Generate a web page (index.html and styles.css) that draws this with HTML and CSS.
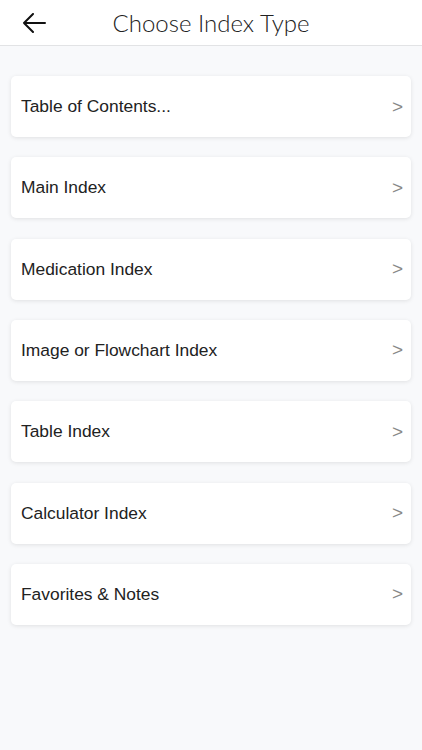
FILE: index.html
```html
<!DOCTYPE html>
<html lang="en">
<head>
    <meta charset="UTF-8">
    <meta name="viewport" content="width=device-width, initial-scale=1.0">
    <title>Choose Index Type</title>
    <link rel="stylesheet" href="styles.css">
</head>
<body>
    <!-- Top bar -->
    <div class="top-bar">
        <span class="back-btn">
            <svg width="24" height="20" viewBox="0 0 24 20">
                <path d="M23 10H2M11 1L2 10l9 9" fill="none" stroke="#111" stroke-width="2" stroke-linecap="round" stroke-linejoin="round"/>
            </svg>
        </span>
        <h1>Choose Index Type</h1>
    </div>

    <!-- Index list -->
    <div class="index-list">
        <div class="index-item"><span>Table of Contents...</span><span class="chevron">&gt;</span></div>
        <div class="index-item"><span>Main Index</span><span class="chevron">&gt;</span></div>
        <div class="index-item"><span>Medication Index</span><span class="chevron">&gt;</span></div>
        <div class="index-item"><span>Image or Flowchart Index</span><span class="chevron">&gt;</span></div>
        <div class="index-item"><span>Table Index</span><span class="chevron">&gt;</span></div>
        <div class="index-item"><span>Calculator Index</span><span class="chevron">&gt;</span></div>
        <div class="index-item"><span>Favorites &amp; Notes</span><span class="chevron">&gt;</span></div>
    </div>
</body>
</html>
```

FILE: styles.css
```css
/* Page */
body {
    margin: 0;
    font-family: "Liberation Sans", Arial, sans-serif;
    background-color: #f8f9fb;
    color: #222;
    height: 100vh;
}

/* Header bar */
.top-bar {
    position: relative;
    height: 45px;
    background-color: #fff;
    border-bottom: 1px solid #e2e3e5;
    display: flex;
    align-items: center;
    justify-content: center;
}

.back-btn {
    position: absolute;
    left: 22px;
    top: 13px;
    display: flex;
}

.top-bar h1 {
    margin: 0;
    font-family: Lato, sans-serif;
    font-weight: 300;
    font-size: 24px;
    color: #222;
}

/* List of index types */
.index-list {
    display: flex;
    flex-direction: column;
    gap: 20.33px;
    padding: 30px 11px 0 11px;
}

.index-item {
    height: 61px;
    background-color: #fff;
    border-radius: 5px;
    box-shadow: 0 1px 4px rgba(0, 0, 0, 0.1);
    display: flex;
    align-items: center;
    justify-content: space-between;
    padding: 0 8px 0 10px;
    font-size: 17.4px;
}

.chevron {
    color: #888;
    font-size: 19px;
}
```
